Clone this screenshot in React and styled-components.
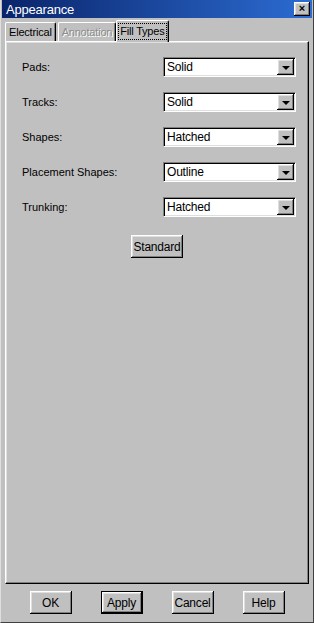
import React from 'react';
import styled, { createGlobalStyle } from 'styled-components';

const GlobalStyle = createGlobalStyle`
  html, body {
    margin: 0;
    padding: 0;
    background: #c0c0c0;
  }
  * {
    box-sizing: border-box;
  }
`;

const raised = `
  box-shadow: inset -1px -1px #000, inset 1px 1px #fff, inset -2px -2px #808080, inset 2px 2px #dfdfdf;
`;

const Window = styled.div`
  width: 314px;
  height: 623px;
  display: flex;
  flex-direction: column;
  background: #c0c0c0;
  padding: 0 1px 0 1px;
  border-left: 1px solid #dfdfdf;
  border-right: 1px solid #404040;
  border-bottom: 1px solid #404040;
  font-family: 'Liberation Sans', Arial, sans-serif;
  font-size: 11px;
  color: #000;
`;

const TitleBar = styled.div`
  height: 18px;
  display: flex;
  align-items: center;
  justify-content: space-between;
  padding: 0 2px 0 4px;
  background: linear-gradient(to right, #0a246a, #2c6cd2);
  color: #fff;
`;

const Title = styled.span`
  font-size: 13px;
  letter-spacing: -0.2px;
`;

const CloseButton = styled.div`
  width: 16px;
  height: 14px;
  background: #c0c0c0;
  ${raised}
  display: flex;
  align-items: center;
  justify-content: center;
  color: #000;
  font-weight: bold;
  font-size: 11px;
  line-height: 1;
  padding-bottom: 1px;
`;

const Body = styled.div`
  flex: 1;
  display: flex;
  flex-direction: column;
  padding: 1px 3px 0 3px;
`;

const TabStrip = styled.div`
  height: 22px;
  display: flex;
  align-items: flex-end;
  position: relative;
  z-index: 1;
`;

const Tab = styled.div`
  height: ${p => (p.$active ? 22 : 19)}px;
  margin: 0 ${p => (p.$active ? -1 : 1)}px ${p => (p.$active ? -1 : 0)}px;
  padding: 0 ${p => (p.$active ? 2 : 3)}px;
  display: flex;
  align-items: center;
  background: #c0c0c0;
  border-top: 1px solid #fff;
  border-left: 1px solid #fff;
  border-right: 1px solid #000;
  border-radius: 2px 2px 0 0;
  box-shadow: inset -1px 0 #808080;
  font-size: 11px;
  letter-spacing: -0.2px;
  color: ${p => (p.$disabled ? '#8c8c8c' : '#000')};
  text-shadow: ${p => (p.$disabled ? '1px 1px #fff' : 'none')};
  &:first-child {
    margin-left: 0;
  }
`;

const FocusLabel = styled.span`
  outline: 1px dotted #000;
  outline-offset: 0;
  padding: 0 1px;
  line-height: 15px;
`;

const Panel = styled.div`
  flex: 1;
  border-top: 1px solid #fff;
  border-left: 1px solid #fff;
  border-right: 1px solid #000;
  border-bottom: 1px solid #000;
  box-shadow: inset -1px -1px #808080, inset 1px 1px #dfdfdf;
  padding: 15px 0 0 16px;
  display: flex;
  flex-direction: column;
`;

const Row = styled.div`
  height: 20px;
  display: flex;
  align-items: center;
  margin-bottom: 15px;
`;

const Label = styled.span`
  width: 141px;
  font-size: 11px;
  padding-bottom: 1px;
`;

const Combo = styled.div`
  width: 133px;
  height: 20px;
  display: flex;
  background: #fff;
  border: 1px solid;
  border-color: #808080 #fff #fff #808080;
  box-shadow: inset 1px 1px #000, inset -1px -1px #dfdfdf;
  padding: 1px;
`;

const ComboValue = styled.span`
  flex: 1;
  padding-left: 2px;
  font-size: 12px;
  line-height: 16px;
  letter-spacing: -0.2px;
`;

const DropButton = styled.div`
  width: 17px;
  height: 16px;
  background: #c0c0c0;
  ${raised}
  display: flex;
  align-items: center;
  justify-content: center;
  &::after {
    content: '';
    border-left: 4px solid transparent;
    border-right: 4px solid transparent;
    border-top: 4px solid #000;
    margin-top: 1px;
  }
`;

const Center = styled.div`
  display: flex;
  justify-content: center;
  padding-right: 16px;
  margin-top: 3px;
`;

const Button = styled.button`
  width: ${p => p.$w || 42}px;
  height: 23px;
  padding: 0;
  border: ${p => (p.$default ? '1px solid #000' : 'none')};
  background: #c0c0c0;
  ${raised}
  font-family: 'Liberation Sans', Arial, sans-serif;
  font-size: 12px;
  letter-spacing: -0.2px;
  color: #000;
`;

const ButtonBar = styled.div`
  height: 38px;
  display: flex;
  justify-content: center;
  gap: 29px;
  padding: 7px 0 0 0;
`;

const rows = [
  ['Pads:', 'Solid'],
  ['Tracks:', 'Solid'],
  ['Shapes:', 'Hatched'],
  ['Placement Shapes:', 'Outline'],
  ['Trunking:', 'Hatched'],
];

export default function App() {
  return (
    <>
      <GlobalStyle />
      <Window>
        <TitleBar>
          <Title>Appearance</Title>
          <CloseButton>×</CloseButton>
        </TitleBar>
        <Body>
          <TabStrip>
            <Tab>Electrical</Tab>
            <Tab $disabled>Annotation</Tab>
            <Tab $active>
              <FocusLabel>Fill Types</FocusLabel>
            </Tab>
          </TabStrip>
          <Panel>
            {rows.map(([label, value]) => (
              <Row key={label}>
                <Label>{label}</Label>
                <Combo>
                  <ComboValue>{value}</ComboValue>
                  <DropButton />
                </Combo>
              </Row>
            ))}
            <Center>
              <Button $w={52}>Standard</Button>
            </Center>
          </Panel>
        </Body>
        <ButtonBar>
          <Button>OK</Button>
          <Button $default>Apply</Button>
          <Button>Cancel</Button>
          <Button>Help</Button>
        </ButtonBar>
      </Window>
    </>
  );
}
